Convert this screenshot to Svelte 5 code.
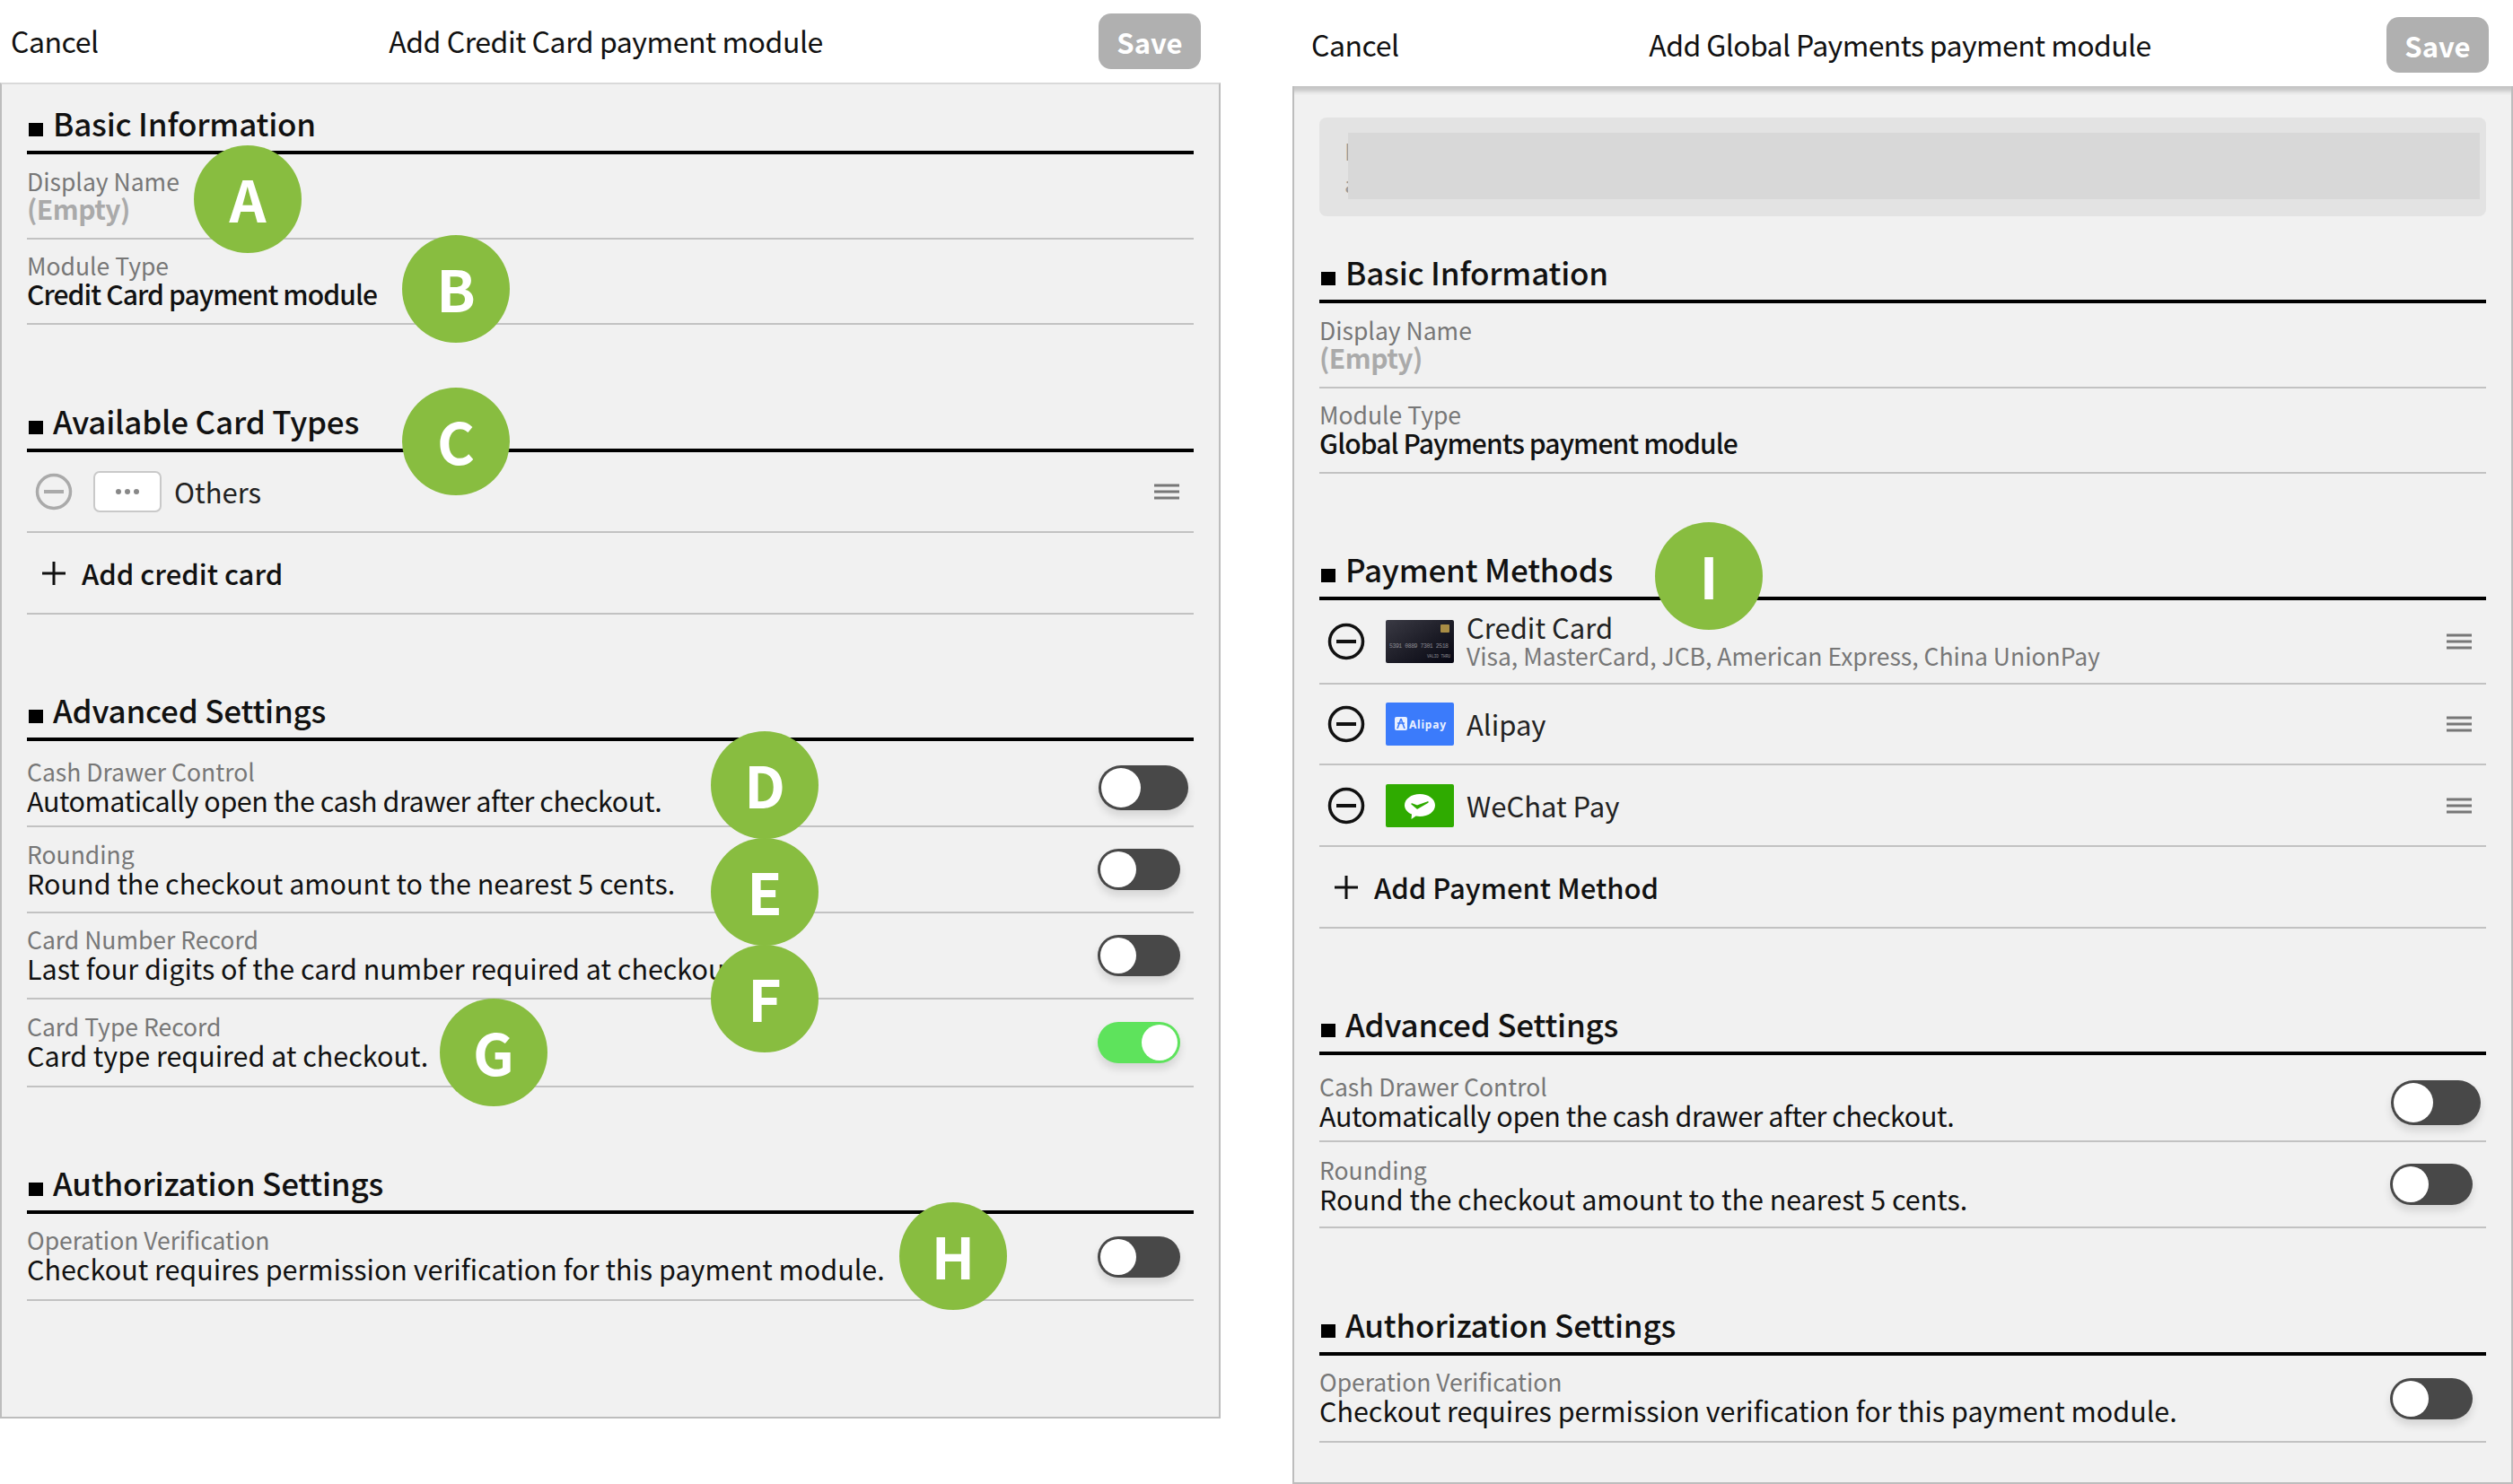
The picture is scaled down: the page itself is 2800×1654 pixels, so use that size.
<script>
  const advancedLeft = [
    { label: 'Cash Drawer Control', value: 'Automatically open the cash drawer after checkout.', h: 96, top: 18, big: true, tight: true },
    { label: 'Rounding', value: 'Round the checkout amount to the nearest 5 cents.', h: 96, top: 14 },
    { label: 'Card Number Record', value: 'Last four digits of the card number required at checkout.', h: 96, top: 13 },
    { label: 'Card Type Record', value: 'Card type required at checkout.', h: 98, top: 14, on: true }
  ]
  const advancedRight = [
    { label: 'Cash Drawer Control', value: 'Automatically open the cash drawer after checkout.', h: 97, top: 19, big: true, tight: true },
    { label: 'Rounding', value: 'Round the checkout amount to the nearest 5 cents.', h: 96, top: 15 }
  ]
  const auth = [
    { label: 'Operation Verification', value: 'Checkout requires permission verification for this payment module.', h: 97, top: 13 }
  ]
  const badges = [
    { t: 'A', x: 276, y: 222 },
    { t: 'B', x: 508, y: 322 },
    { t: 'C', x: 508, y: 492 },
    { t: 'D', x: 852, y: 875 },
    { t: 'E', x: 852, y: 994 },
    { t: 'F', x: 852, y: 1113 },
    { t: 'G', x: 550, y: 1173 },
    { t: 'H', x: 1062, y: 1400 },
    { t: 'I', x: 1904, y: 642 }
  ]
</script>

{#snippet heading(text, gap)}
  <h2 style="margin-top:{gap}px"><i></i>{text}</h2>
{/snippet}

{#snippet info(value, name, top, empty)}
  <div class="row info" style="padding-top:{top}px">
    <span class="label">{name}</span>
    <span class="value strong" class:empty>{value}</span>
  </div>
{/snippet}

{#snippet settings(rows)}
  {#each rows as r}
    <div class="row setting" style="height:{r.h}px;padding-top:{r.top}px">
      <div class="copy">
        <span class="label">{r.label}</span>
        <span class="value" class:tight={r.tight}>{r.value}</span>
      </div>
      <span class="toggle" class:on={r.on} class:big={r.big}></span>
    </div>
  {/each}
{/snippet}

{#snippet minus(dim)}
  <svg class="minus" class:dim width="42" height="42" viewBox="0 0 42 42">
    <circle cx="21" cy="21" r="18.5" fill="none" stroke="currentColor" stroke-width="3.5" />
    <path d="M10 21h22" stroke="currentColor" stroke-width="4" />
  </svg>
{/snippet}

{#snippet grip()}
  <svg class="grip" width="28" height="20" viewBox="0 0 28 20">
    <path d="M0 3h28M0 10h28M0 17h28" stroke="#777" stroke-width="3" />
  </svg>
{/snippet}

{#snippet addRow(text, h)}
  <div class="row add" style="height:{h}px">
    <svg width="30" height="30" viewBox="0 0 30 30"><path d="M15 2v26M2 15h26" stroke="#111" stroke-width="3" /></svg>
    <span>{text}</span>
  </div>
{/snippet}

<main>
  <section class="phone left">
    <header>
      <span class="cancel">Cancel</span>
      <span class="title">Add Credit Card payment module</span>
      <button>Save</button>
    </header>
    <div class="body">
      {@render heading('Basic Information', 0)}
      {@render info('(Empty)', 'Display Name', 14, true)}
      {@render info('Credit Card payment module', 'Module Type', 13, false)}

      {@render heading('Available Card Types', 82)}
      <div class="row method" style="height:90px">
        {@render minus(true)}
        <span class="others"><b></b><b></b><b></b></span>
        <span class="name">Others</span>
        {@render grip()}
      </div>
      {@render addRow('Add credit card', 91)}

      {@render heading('Advanced Settings', 81)}
      {@render settings(advancedLeft)}

      {@render heading('Authorization Settings', 81)}
      {@render settings(auth)}
    </div>
  </section>

  <section class="phone right">
    <header>
      <span class="cancel">Cancel</span>
      <span class="title">Add Global Payments payment module</span>
      <button>Save</button>
    </header>
    <div class="body">
      <div class="notice">
        <span class="peek first">B</span>
        <span class="peek second">a</span>
        <div></div>
      </div>

      {@render heading('Basic Information', 37)}
      {@render info('(Empty)', 'Display Name', 14, true)}
      {@render info('Global Payments payment module', 'Module Type', 13, false)}

      {@render heading('Payment Methods', 81)}
      <div class="row method" style="height:94px">
        {@render minus(false)}
        <svg class="logo" viewBox="0 0 76 48">
          <defs>
            <linearGradient id="cc" x1="0" y1="0" x2="1" y2="1">
              <stop offset="0" stop-color="#3a3a44" />
              <stop offset="0.55" stop-color="#1c1c26" />
              <stop offset="1" stop-color="#060612" />
            </linearGradient>
          </defs>
          <rect width="76" height="48" rx="2" fill="url(#cc)" />
          <rect x="61" y="5" width="10" height="9" rx="1" fill="#a98d45" />
          <text x="4" y="31" font-size="6.500" fill="#8d8d94" font-family="Liberation Mono, monospace" textLength="66">5391 0889 7301 2518</text>
          <text x="46" y="42" font-size="4.500" fill="#8d8d94" font-family="Liberation Mono, monospace" textLength="26">VALID THRU</text>
        </svg>
        <div class="stack">
          <span class="name">Credit Card</span>
          <span class="sub">Visa, MasterCard, JCB, American Express, China UnionPay</span>
        </div>
        {@render grip()}
      </div>
      <div class="row method" style="height:90px">
        {@render minus(false)}
        <svg class="logo" viewBox="0 0 76 48">
          <rect width="76" height="48" rx="2" fill="#3b7bfb" />
          <rect x="10" y="16" width="14" height="15" rx="2" fill="#e9f0ff" />
          <path d="M17 18l-4 11M17 18l4 11M13 23h8" stroke="#3b7bfb" stroke-width="1.6" fill="none" />
          <text x="26" y="29" font-size="12" font-weight="700" fill="#e9f0ff" font-family="Noto Sans, sans-serif" textLength="41">Alipay</text>
        </svg>
        <span class="name">Alipay</span>
        {@render grip()}
      </div>
      <div class="row method" style="height:91px">
        {@render minus(false)}
        <svg class="logo" viewBox="0 0 76 48">
          <rect width="76" height="48" rx="2" fill="#2fab00" />
          <path d="M38 11c9.500 0 17 5.500 17 12.500S47.500 36 38 36c-1.500 0-3-.2-4.400-.5L28.500 39l.5-5.500C24 31.500 21 27.800 21 23.500 21 16.500 28.500 11 38 11z" fill="#fff" />
          <path d="M29 22l6 5 12-7-12 4.200z" fill="#2fab00" stroke="#2fab00" stroke-width="1.500" stroke-linejoin="round" />
        </svg>
        <span class="name">WeChat Pay</span>
        {@render grip()}
      </div>
      {@render addRow('Add Payment Method', 91)}

      {@render heading('Advanced Settings', 81)}
      {@render settings(advancedRight)}

      {@render heading('Authorization Settings', 82)}
      {@render settings(auth)}
    </div>
  </section>

  {#each badges as b}
    <span class="badge" style="left:{b.x - 60}px;top:{b.y - 60}px">{b.t}</span>
  {/each}
</main>

<style>
  :global(body) {
    margin: 0;
    background: #fff;
  }
  main {
    position: relative;
    width: 2800px;
    height: 1654px;
    display: flex;
    gap: 80px;
    align-items: flex-start;
    font-family: "Noto Sans CJK TC", "Noto Sans", sans-serif;
    color: #111;
    overflow: hidden;
  }
  .phone {
    width: 1360px;
    flex: none;
  }
  header {
    display: grid;
    grid-template-columns: 1fr auto 1fr;
    align-items: center;
    box-sizing: border-box;
  }
  .left header {
    height: 92px;
    padding: 0 22px 0 12px;
  }
  .right header {
    height: 96px;
    padding: 4px 27px 0 21px;
  }
  .cancel,
  .title {
    font-size: 32px;
    line-height: 40px;
    letter-spacing: -0.45px;
    padding-bottom: 2px;
  }
  .right .title {
    letter-spacing: -0.6px;
  }
  button {
    justify-self: end;
    width: 114px;
    height: 62px;
    border: 0;
    padding: 0;
    border-radius: 14px;
    background: #b0b0b0;
    color: #fff;
    font: 600 31px "Noto Sans CJK TC", "Noto Sans", sans-serif;
  }
  .body {
    box-sizing: border-box;
    background: #f1f1f1;
    border: 2px solid #bdbdbd;
    padding: 18px 28px 0;
  }
  .left .body {
    height: 1489px;
    border-top-color: #d9d9d9;
  }
  .right .body {
    height: 1558px;
    padding-top: 33px;
    border-top: 0;
    box-shadow: inset 0 10px 4px -4px #c6c6c6;
  }
  .notice {
    position: relative;
    height: 110px;
    box-sizing: border-box;
    margin-top: 2px;
    padding: 17px 7px 19px 32px;
    background: #e3e3e3;
    border-radius: 8px;
  }
  .notice div {
    position: relative;
    height: 74px;
    background: #d8d8d8;
  }
  .peek {
    position: absolute;
    left: 28px;
    font-size: 26px;
    line-height: 30px;
    color: #999;
  }
  .peek.first {
    top: 22px;
  }
  .peek.second {
    top: 58px;
  }
  h2 {
    height: 60px;
    box-sizing: border-box;
    margin: 0;
    border-bottom: 4px solid #000;
    font-size: 35px;
    font-weight: 500;
    line-height: 50px;
    letter-spacing: -0.2px;
    color: #111;
  }
  h2 i {
    display: inline-block;
    width: 16px;
    height: 15px;
    margin: 0 11px 0 2px;
    background: #000;
  }
  .row {
    box-sizing: border-box;
    border-bottom: 2px solid #c2c2c2;
  }
  .info {
    height: 95px;
    display: flex;
    flex-direction: column;
  }
  .label {
    display: block;
    font-size: 26.500px;
    line-height: 32px;
    color: #777;
  }
  .value {
    display: block;
    font-size: 30.500px;
    line-height: 32px;
    color: #111;
  }
  .tight {
    letter-spacing: -0.45px;
  }
  .strong {
    font-size: 30px;
    font-weight: 500;
    line-height: 30px;
    letter-spacing: -0.9px;
  }
  .empty {
    font-weight: 700;
    color: #aaa;
    line-height: 28px;
    letter-spacing: -0.5px;
  }
  .setting {
    position: relative;
  }
  .toggle {
    position: absolute;
    right: 15px;
    top: calc(50% - 23px);
    width: 92px;
    height: 46px;
    box-sizing: border-box;
    border-radius: 23px;
    background: #484848;
    box-shadow: 0 6px 10px rgba(0, 0, 0, 0.12);
  }
  .toggle::after {
    content: "";
    position: absolute;
    left: 3px;
    top: 3px;
    width: 40px;
    height: 40px;
    border-radius: 50%;
    background: #fff;
  }
  .toggle.on {
    background: #5ee35c;
  }
  .toggle.on::after {
    left: auto;
    right: 3px;
  }
  .toggle.big {
    right: 6px;
    top: calc(50% - 20px);
    width: 100px;
    height: 50px;
    border-radius: 25px;
  }
  .toggle.big::after {
    width: 44px;
    height: 44px;
  }
  .method {
    display: flex;
    align-items: center;
    padding: 0 16px 0 9px;
  }
  .minus {
    flex: none;
    color: #111;
    margin-right: 23px;
  }
  .minus.dim {
    color: #aaa;
  }
  .others {
    flex: none;
    width: 76px;
    height: 46px;
    box-sizing: border-box;
    margin-right: 14px;
    display: flex;
    align-items: center;
    justify-content: center;
    gap: 4px;
    background: #fff;
    border: 2px solid #c9c9c9;
    border-radius: 7px;
  }
  .others b {
    width: 6px;
    height: 6px;
    border-radius: 50%;
    background: #888;
  }
  .logo {
    flex: none;
    width: 76px;
    height: 48px;
    margin-right: 14px;
  }
  .name {
    font-size: 31px;
    line-height: 34px;
    color: #222;
  }
  .stack {
    display: flex;
    flex-direction: column;
    margin-top: -2px;
  }
  .sub {
    font-size: 26.500px;
    line-height: 30px;
    color: #777;
  }
  .grip {
    margin-left: auto;
    flex: none;
  }
  .add {
    display: flex;
    align-items: center;
    padding-left: 15px;
    gap: 16px;
    font-size: 31px;
    font-weight: 500;
  }
  .badge {
    position: absolute;
    width: 120px;
    height: 120px;
    border-radius: 50%;
    background: #88bd40;
    color: #fff;
    font: 700 64px/116px "Noto Sans CJK TC", "Noto Sans", sans-serif;
    text-align: center;
  }
</style>
